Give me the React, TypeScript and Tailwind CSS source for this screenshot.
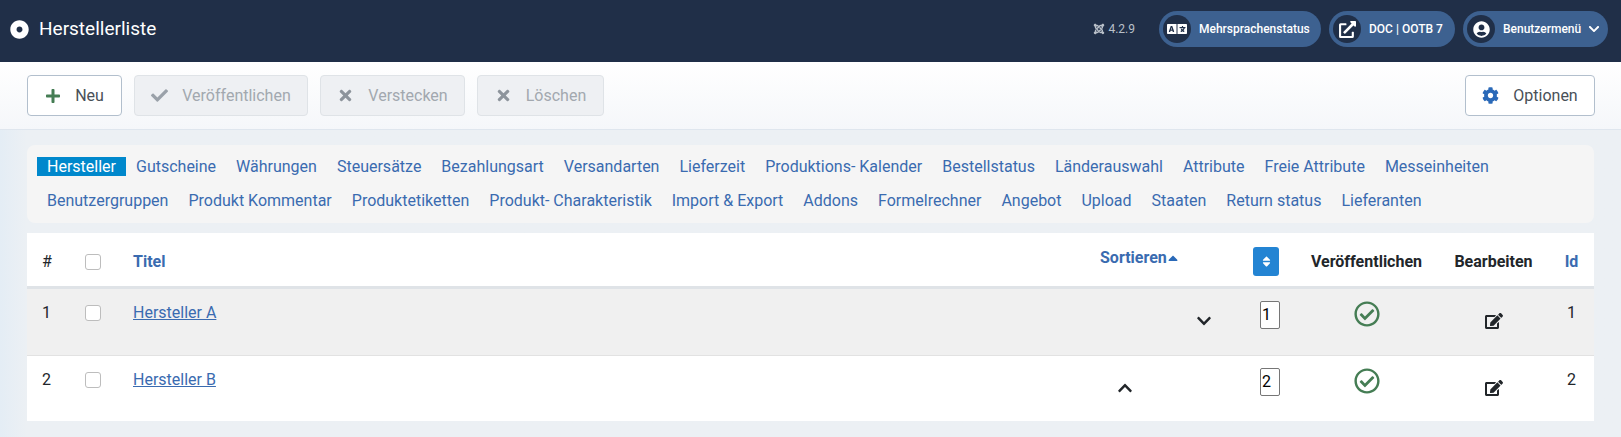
import {
  FaCheck,
  FaChevronDown,
  FaChevronUp,
  FaCog,
  FaDotCircle,
  FaEdit,
  FaExternalLinkAlt,
  FaJoomla,
  FaLanguage,
  FaPlus,
  FaRegCheckCircle,
  FaSort,
  FaSortUp,
  FaTimes,
  FaUserCircle,
} from 'react-icons/fa';

const tabRows = [
  ['Gutscheine', 'Währungen', 'Steuersätze', 'Bezahlungsart', 'Versandarten', 'Lieferzeit', 'Produktions- Kalender', 'Bestellstatus', 'Länderauswahl', 'Attribute', 'Freie Attribute', 'Messeinheiten'],
  ['Benutzergruppen', 'Produkt Kommentar', 'Produktetiketten', 'Produkt- Charakteristik', 'Import & Export', 'Addons', 'Formelrechner', 'Angebot', 'Upload', 'Staaten', 'Return status', 'Lieferanten'],
];

const rows = [
  { id: 1, name: 'Hersteller A', bg: 'bg-[#f0f0f0]', height: 'h-[68px]', up: false, down: true },
  { id: 2, name: 'Hersteller B', bg: 'bg-white', height: 'h-[66px]', up: true, down: false },
];

function Pill({ icon, label, width, chevron }: { icon: React.ReactNode; label: string; width: string; chevron?: boolean }) {
  return (
    <div className={`flex h-9 items-center rounded-full bg-[#3d6190] pl-1 text-xs font-medium text-white ${width}`}>
      <span className="flex h-7 w-7 shrink-0 items-center justify-center rounded-full bg-[#202f48] text-[20px]">{icon}</span>
      <span className="ml-2 whitespace-nowrap">{label}</span>
      {chevron && <FaChevronDown className="ml-[7px] text-[12px]" />}
    </div>
  );
}

function ToolButton({ icon, label, width, disabled }: { icon: React.ReactNode; label: string; width: string; disabled?: boolean }) {
  return (
    <button
      className={`flex h-[41px] items-center justify-center gap-[14px] rounded border text-base ${width} ${
        disabled ? 'border-[#dfe3e7] bg-[#eef0f3] text-[#a2a8af]' : 'border-[#b2bfcd] bg-white text-[#495057]'
      }`}
    >
      {icon}
      {label}
    </button>
  );
}

function Checkbox() {
  return <span className="block h-4 w-4 rounded-[3px] border border-[#bdbdbd] bg-white" />;
}

export default function App() {
  return (
    <div className="flex h-[437px] flex-col overflow-hidden bg-[#ecf0f4] font-['Roboto',sans-serif]">
      <header className="flex h-[62px] shrink-0 items-center bg-[#202f48] pb-1 pl-[10px] pr-[13px] text-white">
        <FaDotCircle className="text-[19px]" />
        <h1 className="ml-2.5 text-[19px]">Herstellerliste</h1>
        <div className="ml-auto flex items-center gap-2">
          <span className="mr-[16px] flex items-center gap-[3px] text-xs text-[#b9c0c9]">
            <FaJoomla className="text-[12px]" />
            4.2.9
          </span>
          <Pill icon={<FaLanguage />} label="Mehrsprachenstatus" width="w-[162px]" />
          <Pill icon={<FaExternalLinkAlt className="text-[17px]" />} label="DOC | OOTB 7" width="w-[126px]" />
          <Pill icon={<FaUserCircle className="text-[17px]" />} label="Benutzermenü" width="w-[145px]" chevron />
        </div>
      </header>

      <div className="flex h-[68px] shrink-0 items-center gap-3 border-b border-[#dfe6ee] bg-gradient-to-b from-white to-[#f5f7fa] pl-[27px] pr-[26px] shadow-[0_1px_2px_rgba(0,0,0,0.04)]">
        <ToolButton icon={<FaPlus className="text-[16px] text-[#457d54]" />} label="Neu" width="w-[95px]" />
        <ToolButton icon={<FaCheck className="text-[17px] text-[#9aa1a9]" />} label="Veröffentlichen" width="w-[174px]" disabled />
        <ToolButton icon={<FaTimes className="text-[17px] text-[#8d949c]" />} label="Verstecken" width="w-[145px]" disabled />
        <ToolButton icon={<FaTimes className="text-[17px] text-[#8d949c]" />} label="Löschen" width="w-[127px]" disabled />
        <div className="ml-auto">
          <ToolButton icon={<FaCog className="text-[17px] text-[#2a69b8]" />} label="Optionen" width="w-[130px]" />
        </div>
      </div>

      <main className="flex flex-1 flex-col gap-2.5 bg-gradient-to-r from-[#e4edf5] from-0% to-[#ecf0f4] to-[27px] px-[27px] pt-[15px]">
        <nav className="flex h-[78px] flex-col gap-[15px] rounded-lg bg-[#f5f5f5] pl-2.5 pt-3 text-base leading-[19px] text-[#3a6bb0]">
          <div className="flex items-center">
            <span className="mr-2.5 bg-[#0088cc] px-2.5 text-white">Hersteller</span>
            <div className="flex gap-5">
              {tabRows[0].map((t) => <span key={t}>{t}</span>)}
            </div>
          </div>
          <div className="flex gap-5 pl-2.5">
            {tabRows[1].map((t) => <span key={t}>{t}</span>)}
          </div>
        </nav>

        <table className="w-full table-fixed border-collapse bg-white text-base text-[#22262a]">
          <colgroup>
            <col className="w-[48px]" />
            <col className="w-[48px]" />
            <col />
            <col className="w-[154px]" />
            <col className="w-[56px]" />
            <col className="w-[143px]" />
            <col className="w-[111px]" />
            <col className="w-[45px]" />
          </colgroup>
          <thead>
            <tr className="h-[54px] border-b-[3px] border-[#dfe3e7] font-bold">
              <th className="pl-[15px] pt-[6px] text-left font-normal">#</th>
              <th className="pl-[10px] pt-[6px] text-left"><Checkbox /></th>
              <th className="pl-[10px] pt-[6px] text-left text-[#3a6bb0]">Titel</th>
              <th className="pb-2 pl-[15px] pt-[6px] text-left text-[#3a6bb0]">
                <span className="inline-flex items-center">
                  Sortieren
                  <FaSortUp className="-ml-[2px] mt-2 text-[16px] text-[#2a69b8]" />
                </span>
              </th>
              <th className="pb-[2px] pl-[14px] pt-[6px] text-left">
                <span className="flex h-[29px] w-[26px] items-center justify-center rounded-[3px] bg-[#2384d3] text-[13px] text-white"><FaSort /></span>
              </th>
              <th className="pt-[6px] text-center">Veröffentlichen</th>
              <th className="pt-[6px] text-center">Bearbeiten</th>
              <th className="pt-[6px] text-center text-[#3a6bb0]">Id</th>
            </tr>
          </thead>
          <tbody>
            {rows.map((r) => (
              <tr key={r.id} className={`${r.height} border-b border-[#e2e2e2] last:border-0 ${r.bg}`}>
                <td className="pl-[15px] pt-[12px] align-top">{r.id}</td>
                <td className="pl-[10px] pt-[16px] align-top"><Checkbox /></td>
                <td className="pl-[10px] pt-[12px] align-top"><a className="text-[#3a6bb0] underline">{r.name}</a></td>
                <td className="align-top">
                  <div className="flex h-[42px] items-end justify-between pb-[2px] pl-[32px] pr-[27px]">
                    {r.up ? <FaChevronUp className="text-[16px]" /> : <span />}
                    {r.down ? <FaChevronDown className="text-[16px]" /> : <span />}
                  </div>
                </td>
                <td className="pl-[21px] pt-[12px] align-top">
                  <span className="block h-[28px] w-[20px] rounded-[2px] border border-[#767676] bg-white pl-px text-[16px] leading-[26px] text-black">{r.id}</span>
                </td>
                <td className="pt-[12px] align-top">
                  <FaRegCheckCircle className="mx-auto text-[26px] text-[#457d54]" />
                </td>
                <td className="pt-[23px] align-top">
                  <FaEdit className="mx-auto text-[18px] text-[#22262a]" />
                </td>
                <td className="pt-[12px] text-center align-top">{r.id}</td>
              </tr>
            ))}
          </tbody>
        </table>
      </main>
    </div>
  );
}
